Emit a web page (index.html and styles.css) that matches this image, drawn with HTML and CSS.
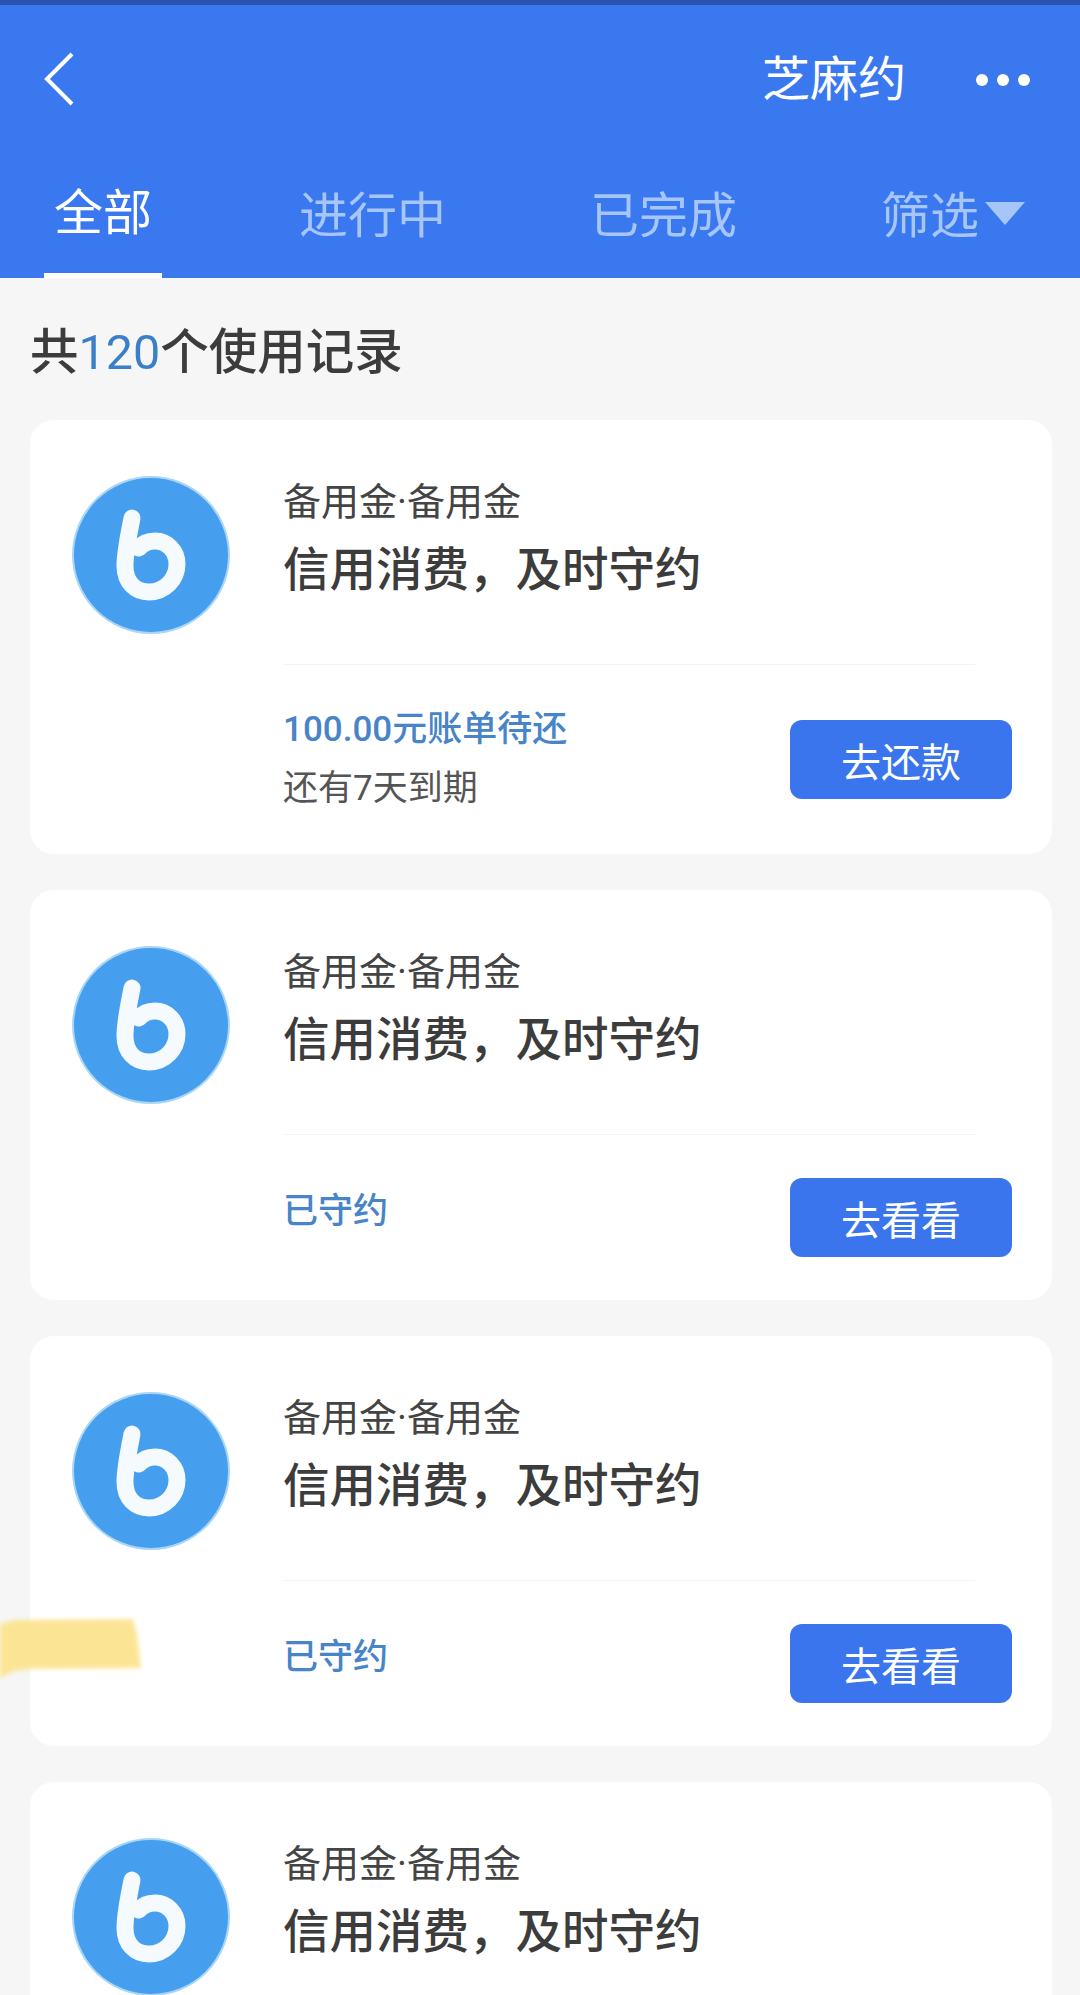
FILE: index.html
```html
<!DOCTYPE html>
<html lang="zh-CN">
<head>
    <meta charset="UTF-8">
    <meta name="viewport" content="width=device-width, initial-scale=1.0">
    <title>芝麻约</title>
    <link rel="stylesheet" href="styles.css">
</head>
<body>

<svg class="defs" width="0" height="0">
    <symbol id="logo" viewBox="0 0 158 158">
        <circle cx="79" cy="79" r="78" fill="#459fee" stroke="#a9d6f7" stroke-width="2"/>
        <path d="M60 42 C57 58 53 75 53 90 C53 106 63 116 77 116 C93 116 105 103 105 88 C105 75 95 65 83 65 C77 65 71 67 67 72" fill="none" stroke="#f4fafe" stroke-width="17" stroke-linecap="round"/>
    </symbol>
</svg>

<div class="header">
    <div class="navbar">
        <svg class="back" width="34" height="56" viewBox="0 0 34 56">
            <path d="M30 3 L5 28 L30 53" fill="none" stroke="#fff" stroke-width="4"/>
        </svg>
        <div class="nav-title">芝麻约</div>
        <div class="more"><span></span><span></span><span></span></div>
    </div>
    <div class="tabs">
        <div class="tab tab-active">全部</div>
        <div class="tab">进行中</div>
        <div class="tab">已完成</div>
        <div class="tab">筛选<span class="arrow"></span></div>
    </div>
</div>

<div class="count">共<span class="count-num">120</span>个使用记录</div>

<div class="card">
    <div class="card-top">
        <svg class="logo"><use href="#logo"/></svg>
        <div>
            <div class="product">备用金·备用金</div>
            <div class="headline">信用消费，及时守约</div>
        </div>
    </div>
    <div class="divider"></div>
    <div class="card-bottom card-bottom-tall">
        <div>
            <div class="status">100.00元账单待还</div>
            <div class="due">还有7天到期</div>
        </div>
        <button class="action">去还款</button>
    </div>
</div>

<div class="card">
    <div class="card-top">
        <svg class="logo"><use href="#logo"/></svg>
        <div>
            <div class="product">备用金·备用金</div>
            <div class="headline">信用消费，及时守约</div>
        </div>
    </div>
    <div class="divider"></div>
    <div class="card-bottom">
        <div class="status status-kept">已守约</div>
        <button class="action">去看看</button>
    </div>
</div>

<div class="card">
    <div class="card-top">
        <svg class="logo"><use href="#logo"/></svg>
        <div>
            <div class="product">备用金·备用金</div>
            <div class="headline">信用消费，及时守约</div>
        </div>
    </div>
    <div class="divider"></div>
    <div class="card-bottom">
        <div class="status status-kept">已守约</div>
        <button class="action">去看看</button>
    </div>
</div>

<div class="card">
    <div class="card-top">
        <svg class="logo"><use href="#logo"/></svg>
        <div>
            <div class="product">备用金·备用金</div>
            <div class="headline">信用消费，及时守约</div>
        </div>
    </div>
</div>

<!-- highlighter smudge over the third card -->
<svg class="smudge" width="146" height="66" viewBox="0 0 146 66">
    <path d="M0 8 L14 4 L133 3 L137 18 L141 52 L30 53 L14 55 L0 62 Z" fill="#fbe595"/>
</svg>

</body>
</html>
```

FILE: styles.css
```css
html, body {
    height: 1995px;
    overflow: hidden;
}
body {
    position: relative;
    margin: 0;
    background: #f6f6f6;
    color: #333;
    font-family: Roboto, 'Noto Sans CJK SC', sans-serif;
}
.defs {
    display: block;
    height: 0;
}
.header {
    height: 278px;
    box-sizing: border-box;
    background: #3a78f0;
    border-top: 5px solid #2a53b0;
}
.navbar {
    display: flex;
    align-items: center;
    height: 150px;
    padding: 0 50px 0 41px;
}
.back {
    margin-top: -3px;
    margin-left: 1px;
}
.nav-title {
    margin-left: auto;
    color: #fff;
    font-size: 48px;
    line-height: 56px;
}
.more {
    display: flex;
    gap: 9px;
    margin-left: 70px;
}
.more span {
    width: 12px;
    height: 12px;
    border-radius: 50%;
    background: #fff;
}
.tabs {
    display: flex;
    gap: 144px;
    height: 123px;
    padding-left: 44px;
}
.tab {
    display: flex;
    align-items: center;
    height: 112px;
    color: #a6c5f9;
    font-size: 49px;
}
.tab-active {
    box-sizing: border-box;
    justify-content: center;
    width: 118px;
    height: 123px;
    margin-right: -7px;
    padding-bottom: 11px;
    border-bottom: 5px solid #fff;
    color: #fff;
}
.arrow {
    width: 0;
    height: 0;
    margin-left: 6px;
    margin-top: 4px;
    border-left: 20px solid transparent;
    border-right: 20px solid transparent;
    border-top: 23px solid #a6c5f9;
}
.count {
    height: 142px;
    padding-left: 30px;
    font-size: 48.5px;
    font-weight: 500;
    line-height: 150px;
    color: #3c3c3c;
}
.count-num {
    color: #3c7fc9;
    font-weight: 400;
}
.card {
    margin: 0 28px 36px 30px;
    background: #fff;
    border-radius: 24px;
}
.card-top {
    display: flex;
    height: 188px;
    padding: 56px 0 0 42px;
}
.logo {
    flex: none;
    width: 158px;
    height: 158px;
    margin-right: 53px;
}
.product {
    font-size: 38px;
    line-height: 52px;
    color: #444;
}
.headline {
    margin-top: 10px;
    font-size: 46.5px;
    font-weight: 500;
    line-height: 64px;
    color: #3c3c3c;
}
.divider {
    height: 1px;
    margin: 0 77px 0 253px;
    background: #f4f4f4;
}
.card-bottom {
    display: flex;
    justify-content: space-between;
    align-items: center;
    height: 165px;
    padding: 0 40px 0 253px;
}
.card-bottom-tall {
    height: 189px;
}
.status {
    font-size: 35px;
    font-weight: 500;
    line-height: 48px;
    color: #4784c8;
}
.status-kept {
    margin-bottom: 12px;
}
.due {
    margin-top: 10px;
    font-size: 35px;
    line-height: 50px;
    color: #555;
}
.action {
    width: 222px;
    height: 79px;
    padding: 0;
    border: none;
    border-radius: 12px;
    background: #3a75ee;
    color: #fff;
    font-family: inherit;
    font-size: 40px;
}
.smudge {
    position: absolute;
    left: 0;
    top: 1616px;
    filter: blur(2px);
}
```
